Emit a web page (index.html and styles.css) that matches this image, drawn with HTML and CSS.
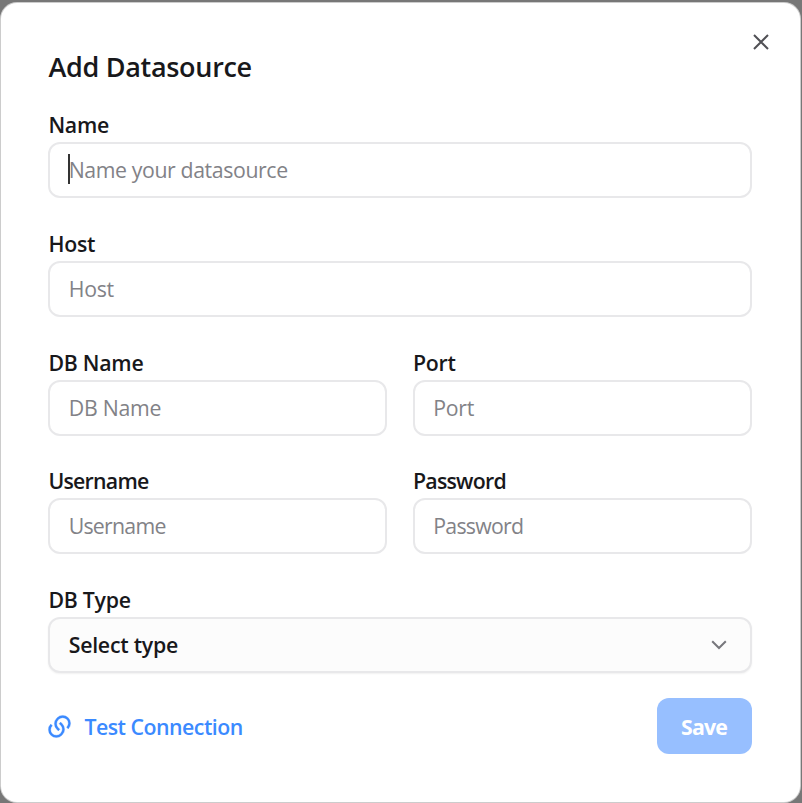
FILE: index.html
```html
<!DOCTYPE html>
<html lang="en">

<head>
    <meta charset="UTF-8">
    <meta name="viewport" content="width=device-width,initial-scale=1.0">
    <title>Add Datasource</title>
    <link rel="stylesheet" href="styles.css">
</head>
<body>
    <div class="dialog" role="dialog" aria-labelledby="dialogTitle">
        <button class="close" type="button" aria-label="Close">
            <svg viewBox="0 0 16 16"><path d="M1 1 L15 15 M15 1 L1 15" /></svg>
        </button>

        <h2 id="dialogTitle">Add Datasource</h2>

        <form action="">
            <div class="field wide">
                <label for="name">Name</label>
                <div class="control">
                    <input id="name" placeholder="Name your datasource" autocomplete="off">
                    <span class="caret"></span>
                </div>
            </div>
            <div class="field wide">
                <label for="host">Host</label>
                <input id="host" placeholder="Host" autocomplete="off">
            </div>
            <div class="field">
                <label for="dbName">DB Name</label>
                <input id="dbName" placeholder="DB Name" autocomplete="off">
            </div>
            <div class="field">
                <label for="port">Port</label>
                <input id="port" placeholder="Port" autocomplete="off">
            </div>
            <div class="field tight">
                <label for="username">Username</label>
                <input id="username" placeholder="Username" autocomplete="off">
            </div>
            <div class="field tight">
                <label for="password">Password</label>
                <input id="password" type="password" placeholder="Password" autocomplete="off">
            </div>
            <div class="field wide">
                <label for="dbType">DB Type</label>
                <button id="dbType" class="select" type="button">
                    <span>Select type</span>
                    <svg viewBox="0 0 16 10"><path d="M1.2 1.2 L8 8 L14.8 1.2" /></svg>
                </button>
            </div>
        </form>

        <footer>
            <button class="test" type="button">
                <svg viewBox="0 0 24 24"><path d="M13.06 8.11l1.415 1.415a7 7 0 0 1 0 9.9l-.354.353a7 7 0 0 1-9.9-9.9l1.415 1.415a5 5 0 1 0 7.071 7.071l.354-.354a5 5 0 0 0 0-7.07l-1.415-1.415 1.415-1.415zm6.718 6.011l-1.414-1.414a5 5 0 1 0-7.071-7.071l-.354.354a5 5 0 0 0 0 7.07l1.415 1.415-1.415 1.414-1.414-1.414a7 7 0 0 1 0-9.9l.354-.353a7 7 0 0 1 9.9 9.9z" /></svg>
                <span>Test Connection</span>
            </button>
            <button class="save" type="submit" disabled>Save</button>
        </footer>
    </div>
</body>
</html>
```

FILE: styles.css
```css
* { box-sizing: border-box; }
body { margin: 0; height: 803px; padding: 3px 2px 1px 1px; overflow: hidden; background: #777; color: #18181b; font-family: "Segoe UI", "Open Sans", "Noto Sans", sans-serif; font-size: 21.3px; letter-spacing: -0.25px; }
button, input { font: inherit; color: inherit; letter-spacing: inherit; }
button { border: none; background: none; padding: 0; }
svg { display: block; fill: none; stroke: currentColor; }

.dialog { position: relative; height: 799px; padding: 44px 48px 0 47.4px; background: #fff; border-radius: 16px; box-shadow: 0 0 0 1px #ccc; }
.close { position: absolute; top: 31px; right: 31px; color: #505055; }
.close svg { width: 16px; height: 16px; stroke-width: 2; }
h2 { margin: 0; height: 62px; font-size: 27px; font-weight: 600; line-height: 39px; letter-spacing: -0.3px; }

form { display: grid; grid-template-columns: 1fr 1fr; gap: 29.75px 25.5px; }
.field { height: 89px; display: flex; flex-direction: column; }
.wide { grid-column: span 2; }
label { height: 33px; font-weight: 600; line-height: 32px; }
.tight { letter-spacing: -0.75px; }
.control { position: relative; }
input, .select { display: block; width: 100%; height: 56px; padding: 0 18.3px 1px; border: 2px solid #e8e8ea; border-radius: 12px; background: #fff; outline: none; }
input::placeholder { color: #828287; opacity: 1; }
#name { letter-spacing: -0.4px; }
.caret { position: absolute; left: 20px; top: 12px; width: 2px; height: 30px; background: #333; }
.select { display: flex; align-items: center; justify-content: space-between; padding-right: 23px; background: #fcfcfc; font-weight: 600; box-shadow: 0 1px 2px rgba(0, 0, 0, 0.06); }
.select svg { width: 16px; height: 10px; color: #77777c; stroke-width: 2; }

footer { display: flex; align-items: center; justify-content: space-between; margin-top: 25px; }
.test { display: flex; align-items: center; gap: 11px; color: #3b8aff; font-weight: 600; letter-spacing: -0.5px; }
.test svg { width: 27px; height: 27px; margin-left: -2px; stroke-width: 0.3; fill: currentColor; }
.save { width: 95px; height: 56px; padding-right: 1px; border-radius: 12px; background: #97bfff; color: #fff; font-weight: 700; letter-spacing: -0.8px; }
```
